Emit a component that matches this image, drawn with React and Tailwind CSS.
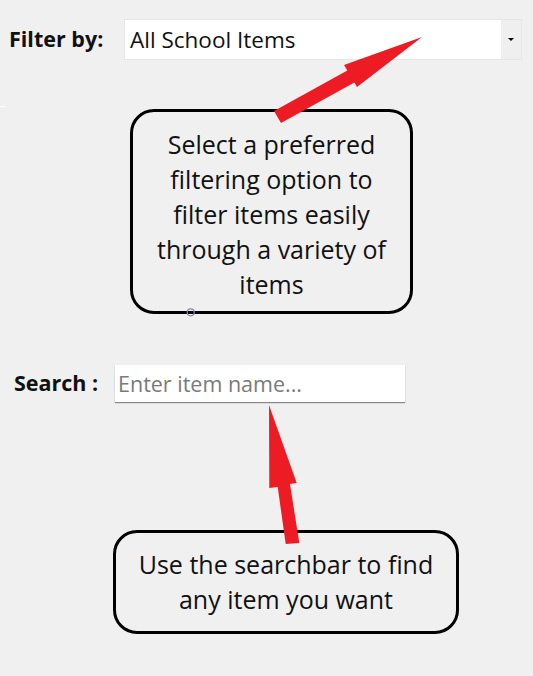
import React from "react";

const font = { fontFamily: '"Open Sans", "Noto Sans", sans-serif' };

// Red arrows drawn over the page
const Arrows = () => (
  <svg
    className="absolute left-0 top-0 pointer-events-none"
    width="533"
    height="676"
    viewBox="0 0 533 676"
  >
    <polygon
      fill="#ed1c24"
      points="274,111 347.3,70.6 344,65 422,37 357,87 354.4,82.6 281,123"
    />
    <polygon
      fill="#ed1c24"
      points="269,405 296.7,483 290,484 299.3,543 285.7,544 277.7,487 269.3,488"
    />
    <circle cx="190.7" cy="312.3" r="3.5" fill="none" stroke="#8a8aa8" strokeWidth="1.2" />
  </svg>
);

const Callout = ({ className, lines }) => (
  <div
    className={`flex flex-col items-center justify-center border-[3px] border-black text-[25px] leading-[35px] text-[#111] ${className}`}
  >
    {lines.map((l) => (
      <div key={l} className="whitespace-nowrap">
        {l}
      </div>
    ))}
  </div>
);

export default function App() {
  return (
    <div
      className="relative w-[533px] h-[676px] overflow-hidden bg-[#f0f0f0]"
      style={font}
    >
      {/* Filter row */}
      <div className="flex items-center pt-[19px]">
        <span className="w-[124px] pl-[9px] text-[21.5px] font-bold text-[#111]">
          Filter by:
        </span>
        <div className="flex h-[41px] w-[398px] border border-[#e6e6e6] bg-white">
          <div className="flex flex-1 items-center pl-[5px] text-[22.5px] text-[#111]">
            All School Items
          </div>
          <div className="flex w-[20px] items-center justify-center bg-[#efefef]">
            <div className="h-0 w-0 border-x-[3px] border-t-[3px] border-x-transparent border-t-black" />
          </div>
        </div>
      </div>

      <div className="absolute left-0 top-[106px] h-px w-[6px] bg-white" />

      {/* Filter hint */}
      <Callout
        className="ml-[130px] mt-[49px] h-[205px] w-[283px] rounded-[24px] pt-[6px]"
        lines={[
          "Select a preferred",
          "filtering option to",
          "filter items easily",
          "through a variety of",
          "items",
        ]}
      />

      {/* Search row */}
      <div className="mt-[51px] flex items-center">
        <span className="w-[115px] pl-[14px] text-[21.5px] font-bold text-[#111]">
          Search :
        </span>
        <input
          className="h-[37px] w-[290px] bg-white px-[3px] text-[21.5px] text-[#111] shadow-[0_1px_1px_rgba(0,0,0,0.45)] outline-none placeholder:text-[#7a7a7a]"
          placeholder="Enter item name..."
        />
      </div>

      {/* Search hint */}
      <Callout
        className="ml-[113px] mt-[128px] h-[104px] w-[346px] rounded-[24px]"
        lines={["Use the searchbar to find", "any item you want"]}
      />

      <Arrows />
    </div>
  );
}
